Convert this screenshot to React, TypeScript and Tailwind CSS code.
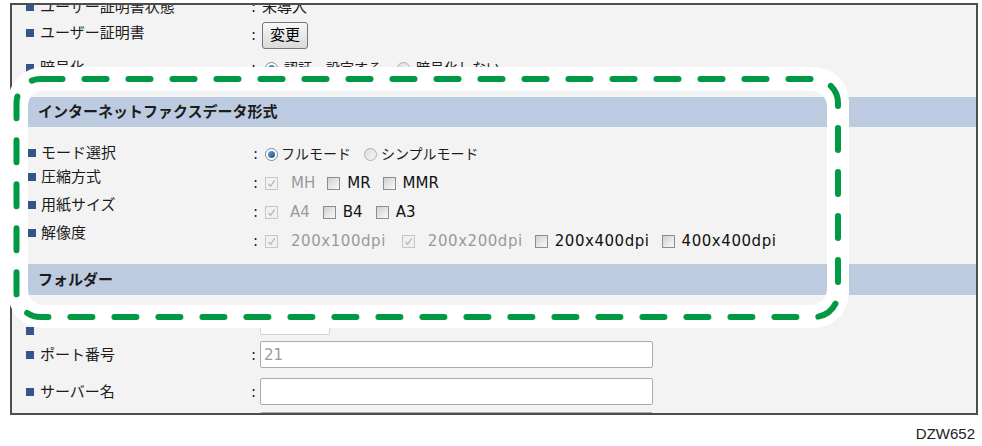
import React from 'react';

function Square({ className = '' }: { className?: string }) {
  return <span className={`block w-[8px] h-[8px] bg-[#34558b] shrink-0 ${className}`} />;
}

function Radio({ checked }: { checked?: boolean }) {
  if (checked) {
    return (
      <span className="w-[13px] h-[13px] rounded-full border border-[#7b8aa0] bg-white flex items-center justify-center shrink-0">
        <span className="block w-[7px] h-[7px] rounded-full bg-gradient-to-br from-[#6f9fd8] to-[#1d4f8f]" />
      </span>
    );
  }
  return <span className="block w-[13px] h-[13px] rounded-full border border-[#b0b0b0] bg-gradient-to-br from-[#dcdcdc] to-[#f7f7f7] shrink-0" />;
}

function Check({ disabled }: { disabled?: boolean }) {
  if (disabled) {
    return (
      <span className="w-[13px] h-[13px] border border-[#c6c6c6] bg-[#f1f1f1] flex items-center justify-center shrink-0">
        <svg width="11" height="11" viewBox="0 0 11 11">
          <path d="M2.5 6 L4.6 8.3 L8.6 2.4" fill="none" stroke="#b3b3b3" strokeWidth="1.2" />
        </svg>
      </span>
    );
  }
  return <span className="block w-[13px] h-[13px] border border-[#8d8d8d] bg-gradient-to-br from-[#d0d0d0] to-[#fafafa] shrink-0" />;
}

function Label({ text, width = 'w-[225px]' }: { text: string; width?: string }) {
  return (
    <div className={`flex items-center ${width} shrink-0`}>
      <Square className="mr-[6px]" />
      <span>{text}</span>
    </div>
  );
}

export default function App() {
  return (
    <div className="relative w-[982px] h-[446px] bg-white overflow-hidden font-['DejaVu_Sans','Noto_Sans_CJK_JP',sans-serif] text-[15px] text-[#1c1c1c] leading-[20px]">
      {/* 設定画面 */}
      <div className="ml-[10px] mt-[3px] w-[968px] h-[412px] border-2 border-[#4d4d4d] bg-[#f3f3f3] overflow-hidden">
        <div className="pl-[14px] -mt-[11px]">
          <div className="h-[26px] flex items-center">
            <Label text="ユーザー証明書状態" />
            <span className="w-[11px]">:</span>
            <span>未導入</span>
          </div>
          <div className="h-[30px] flex items-center">
            <div className="-mt-[4px]">
              <Label text="ユーザー証明書" />
            </div>
            <span className="w-[11px]">:</span>
            <button className="w-[46px] h-[27px] border border-[#767676] rounded-[3px] bg-gradient-to-b from-[#f7f7f7] to-[#dadada] text-[15px] leading-none text-black">
              変更
            </button>
          </div>
          <div className="h-[36px] flex items-center">
            <Label text="暗号化" />
            <span className="w-[14px]">:</span>
            <Radio checked />
            <span className="ml-[6px] text-[14px]">認証・設定する</span>
            <span className="ml-[15px]"><Radio /></span>
            <span className="ml-[6px] text-[14px]">暗号化しない</span>
          </div>
        </div>

        <div className="mt-[11px] h-[30px] bg-[#bccbe0] flex items-center pl-[26px] font-bold text-[15px]">
          インターネットファクスデータ形式
        </div>

        <div className="h-[137px] flex">
          <div className="w-[241px] pl-[16px] pt-[16px] flex flex-col shrink-0">
            <div className="flex items-center h-[20px]"><Square className="mr-[5px]" />モード選択</div>
            <div className="flex items-center h-[20px] mt-[4px]"><Square className="mr-[5px]" />圧縮方式</div>
            <div className="flex items-center h-[20px] mt-[8px]"><Square className="mr-[5px]" />用紙サイズ</div>
            <div className="flex items-center h-[20px] mt-[8px]"><Square className="mr-[5px]" />解像度</div>
          </div>
          <div className="pt-[17px] flex flex-col gap-[9px]">
            <div className="h-[20px] flex items-center">
              <span className="w-[12px]">:</span>
              <Radio checked />
              <span className="ml-[3px] text-[14px]">フルモード</span>
              <span className="ml-[13px]"><Radio /></span>
              <span className="ml-[4px] text-[14px]">シンプルモード</span>
            </div>
            <div className="h-[20px] flex items-center">
              <span className="w-[12px]">:</span>
              <Check disabled />
              <span className="ml-[13px] text-[#9a9a9a]">MH</span>
              <span className="ml-[12px]"><Check /></span>
              <span className="ml-[7px] text-[#111]">MR</span>
              <span className="ml-[12px]"><Check /></span>
              <span className="ml-[7px] text-[#111]">MMR</span>
            </div>
            <div className="h-[20px] flex items-center">
              <span className="w-[12px]">:</span>
              <Check disabled />
              <span className="ml-[12px] text-[#9a9a9a]">A4</span>
              <span className="ml-[13px]"><Check /></span>
              <span className="ml-[7px] text-[#111]">B4</span>
              <span className="ml-[13px]"><Check /></span>
              <span className="ml-[7px] text-[#111]">A3</span>
            </div>
            <div className="h-[20px] flex items-center tracking-[0.55px]">
              <span className="w-[12px]">:</span>
              <Check disabled />
              <span className="ml-[13px] text-[#9a9a9a]">200x100dpi</span>
              <span className="ml-[16px]"><Check disabled /></span>
              <span className="ml-[13px] text-[#9a9a9a]">200x200dpi</span>
              <span className="ml-[12px]"><Check /></span>
              <span className="ml-[7px] text-[#111]">200x400dpi</span>
              <span className="ml-[12px]"><Check /></span>
              <span className="ml-[7px] text-[#111]">400x400dpi</span>
            </div>
          </div>
        </div>

        <div className="h-[31px] bg-[#bccbe0] flex items-center pl-[26px] font-bold text-[15px]">
          フォルダー
        </div>

        <div className="pl-[14px]">
          <div className="mt-[13px] h-[27px] flex items-end">
            <div className="w-[225px] flex items-end shrink-0">
              <Square />
            </div>
            <span className="w-[9px]" />
            <div className="w-[70px] h-[27px] border border-[#c9d3df] rounded-[2px] bg-white" />
          </div>
          <div className="mt-[6px] h-[27px] flex items-center">
            <Label text="ポート番号" />
            <span className="w-[9px]">:</span>
            <div className="w-[393px] h-[27px] border border-[#ababab] rounded-[2px] bg-white flex items-center pl-[3px] text-[#9a9a9a]">
              21
            </div>
          </div>
          <div className="mt-[10px] h-[27px] flex items-center">
            <Label text="サーバー名" />
            <span className="w-[9px]">:</span>
            <div className="w-[393px] h-[27px] border border-[#ababab] rounded-[2px] bg-white" />
          </div>
          <div className="mt-[7px] h-[27px] flex items-start">
            <div className="w-[234px] shrink-0" />
            <div className="w-[393px] h-[27px] border border-[#ababab] rounded-[2px] bg-white" />
          </div>
        </div>
      </div>

      <div className="mt-[10px] pr-[7px] text-right font-['Liberation_Sans',sans-serif] text-[15px] leading-[17px] text-[#222]">
        DZW652
      </div>

      {/* 強調枠 */}
      <svg className="absolute left-0 top-0 pointer-events-none" width="982" height="446" viewBox="0 0 982 446">
        <path
          fill="#ffffff"
          fillRule="evenodd"
          d="M43 67 H814 A35 35 0 0 1 849 102 V293 A35 35 0 0 1 814 328 H43 A35 35 0 0 1 8 293 V102 A35 35 0 0 1 43 67 Z M43 90.5 H811 A16 16 0 0 1 827 106.5 V289 A16 16 0 0 1 811 305 H43 A15 15 0 0 1 28 290 V105.5 A15 15 0 0 1 43 90.5 Z"
        />
        <rect
          x="16.5"
          y="79"
          width="821.5"
          height="238"
          rx="24"
          fill="none"
          stroke="#009944"
          strokeWidth="6"
          strokeLinecap="round"
          strokeDasharray="22 22"
        />
      </svg>
    </div>
  );
}
